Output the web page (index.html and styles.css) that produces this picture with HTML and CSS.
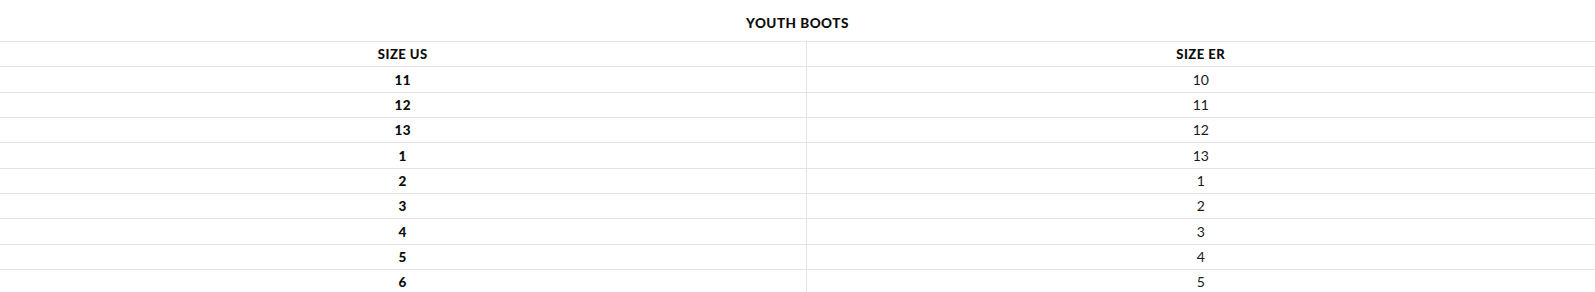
FILE: index.html
```html
<!DOCTYPE html>
<html>
<head>
<meta charset="utf-8">
<link rel="stylesheet" href="styles.css">
</head>
<body>
<div class="chart">
  <div class="title">YOUTH BOOTS</div>
  <table class="sizes">
    <colgroup><col class="c1"><col class="c2"></colgroup>
    <tr class="head"><td>SIZE US</td><td>SIZE ER</td></tr>
    <tr><td class="us">11</td><td>10</td></tr>
    <tr><td class="us">12</td><td>11</td></tr>
    <tr><td class="us">13</td><td>12</td></tr>
    <tr><td class="us">1</td><td>13</td></tr>
    <tr><td class="us">2</td><td>1</td></tr>
    <tr><td class="us">3</td><td>2</td></tr>
    <tr><td class="us">4</td><td>3</td></tr>
    <tr><td class="us">5</td><td>4</td></tr>
    <tr><td class="us">6</td><td>5</td></tr>
  </table>
</div>
</body>
</html>
```
FILE: styles.css
```css
html, body {
  margin: 0;
  padding: 0;
  background: #ffffff;
}
body {
  font-family: "Lato", "DejaVu Sans", sans-serif;
  color: #111111;
  overflow: hidden;
}
.title {
  height: 41px;
  line-height: 47px;
  text-align: center;
  font-weight: 900;
  font-size: 13.5px;
  letter-spacing: 0.5px;
  color: #0c0c0c;
}
.sizes {
  width: 1595px;
  border-collapse: collapse;
  table-layout: fixed;
}
.c1 { width: 806px; }
.sizes td {
  height: 24.35px;
  padding: 0;
  text-align: center;
  vertical-align: middle;
  border-top: 1px solid #e4e4e4;
  border-bottom: 1px solid #e4e4e4;
  font-size: 14px;
  color: #1a1a1a;
  line-height: 24px;
}
.sizes td + td {
  border-left: 1px solid #e4e4e4;
}
.head td {
  font-weight: 900;
  font-size: 13px;
  letter-spacing: 0.5px;
  color: #0c0c0c;
}
.sizes td.us {
  font-weight: 900;
  font-size: 13.5px;
  letter-spacing: 0.5px;
  color: #0c0c0c;
}
```
